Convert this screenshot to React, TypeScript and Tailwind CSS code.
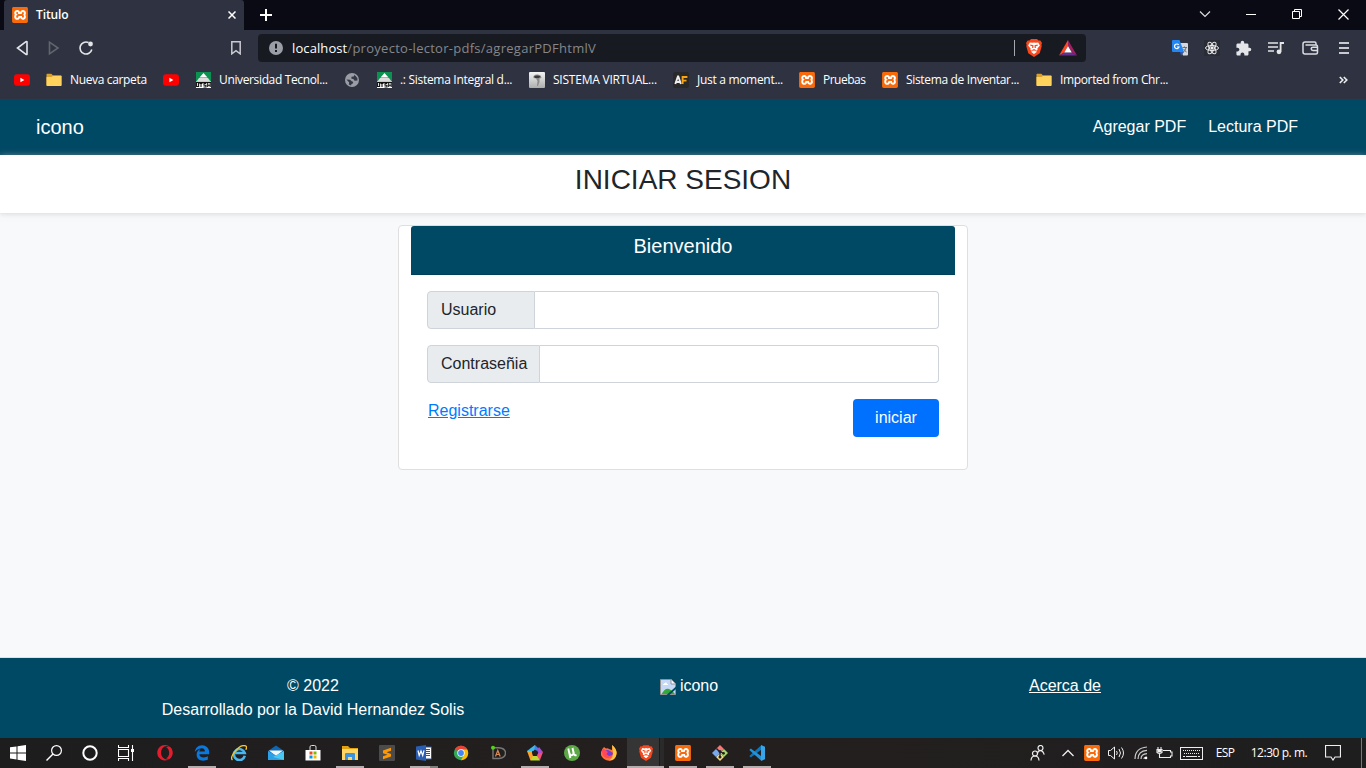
import React, { ReactNode } from 'react';
import { SiXampp } from 'react-icons/si';
import { FaEdgeLegacy, FaOpera } from 'react-icons/fa6';
import { MdExtension } from 'react-icons/md';

const XamppIcon = () => (
  <span className="flex h-4 w-4 items-center justify-center rounded-[2px] bg-[linear-gradient(white,white)] bg-[length:14px_14px] bg-center bg-no-repeat">
    <SiXampp size={16} color="#f96a0a" />
  </span>
);

const YoutubeIcon = () => (
  <svg width="16" height="16" viewBox="0 0 16 16">
    <rect y="2.300" width="16" height="11.400" rx="3" fill="#f00" />
    <path d="M6.400 5.700v4.600L10.400 8z" fill="#fff" />
  </svg>
);

const FolderIcon = () => (
  <svg width="16" height="16" viewBox="0 0 16 16">
    <path d="M.5 2.500q0-.8.8-.8h4l1.500 1.500h8q.7 0 .7.8v9q0 1-.8 1H1.300q-.8 0-.8-.9z" fill="#d9a02c" />
    <path d="M.5 5h5l1.500-1h8.500v9q0 .900-.8.900H1.300q-.8 0-.8-.9z" fill="#ffd35c" />
  </svg>
);

const UtshIcon = () => (
  <svg width="15" height="16" viewBox="0 0 15 16">
    <path d="M0 0h15v16H0z" fill="#fff" />
    <path d="M0 0h15v9.500H0z" fill="#0b9150" />
    <path d="M7.500 1l4 4.500H3.500z" fill="#fff" />
    <path d="M3 6h9l2.500 3.500H.5z" fill="#ddd" />
    <path d="M0 10h15v1H0z" fill="#111" />
    <path d="M.6 11v3.500h2V11M3.500 11.500h3M5 11.500V15M10.300 11.500H8v1.800h2V15H7.500M11.700 11v4M11.700 13.200h2.500M14.200 11v4" stroke="#111" strokeWidth="1.100" fill="none" />
  </svg>
);

const GlobeIcon = () => (
  <svg width="14" height="14" viewBox="0 0 14 14">
    <circle cx="7" cy="7" r="7" fill="#9a9da4" />
    <path d="M9.500 1.800L8.700 3.500 6.500 3.800 6.300 5.500 8.700 6.300 9.500 7.700 12.500 7.500 12.300 5z" fill="#343846" />
    <path d="M1.500 6.500L5 6.800l1.700 1.500 1.600.8-.8 1.700-1.200.5-.2 1.200-2.300-.9.400-2z" fill="#343846" />
  </svg>
);

const SealIcon = () => (
  <svg width="16" height="16" viewBox="0 0 16 16">
    <defs>
      <linearGradient id="seal" x2="0" y2="1">
        <stop stopColor="#f4f4f4" />
        <stop offset="1" stopColor="#adadad" />
      </linearGradient>
    </defs>
    <rect width="16" height="16" rx="1" fill="url(#seal)" />
    <path d="M4.500 4q3-2.500 7-.5l1 2.500-2 .5v3.500l-1.500 4H8L8.500 9 7 6.500 4.500 6z" fill="#8b8b8b" />
    <path d="M5 4.500Q8 2.500 11.500 4.500L10 6H6z" fill="#3a3a3a" />
  </svg>
);

const AfIcon = () => (
  <svg width="16" height="16" viewBox="0 0 16 16" fill="none" strokeWidth="1.900">
    <rect width="16" height="16" rx="2.500" fill="#292929" />
    <path d="M2.300 12L4.900 4.500h.4L7.900 12M3.500 10h3.300" stroke="#eee" />
    <path d="M9.600 12V5h4.800M9.500 8.600h4" stroke="#f7a417" />
  </svg>
);

const BraveIcon = ({ w = 16, h = 18 }: { w?: number; h?: number }) => (
  <svg width={w} height={h} viewBox="0 0 16 18">
    <path d="M5 0h6l1.500 1.500 1.800-.1L16 4l-.6 1.800.3 1.500-2 7L8 18l-5.700-3.700-2-7 .3-1.500L0 4l1.700-2.600 1.800.1z" fill="#f9471c" />
    <path d="M3.800 3.400l2.500.4L8 3.400l1.700.4 2.500-.4 1.700 3-2.500 3.100.2 1.500-2.200 1L11 12.700 8 15l-3-2.300 1.600-.7-2.200-1 .2-1.500L2.100 6.400z" fill="#fff" />
    <path d="M4.200 6l2.700.8-.2 2.200M11.800 6l-2.700.8.2 2.200M6.300 11.500L8 10.700l1.700.8" stroke="#f9471c" fill="none" strokeWidth="1.200" />
  </svg>
);

const BatIcon = () => (
  <svg width="18" height="16" viewBox="0 0 18 16">
    <path d="M9 0L0 15.500 5.200 12.500 9 6z" fill="#ff4724" />
    <path d="M9 0l9 15.500-5.200-3L9 6z" fill="#9e1f63" />
    <path d="M0 15.500h18l-5.200-3H5.200z" fill="#662d91" />
    <path d="M9 6l3.800 6.500H5.200z" fill="#fff" />
  </svg>
);

const TranslateIcon = () => (
  <svg width="16" height="16" viewBox="0 0 16 16" fill="none">
    <path d="M7 3h8q1 0 1 1v10.500q0 1-1 1h-4z" fill="#d5d8dc" />
    <path d="M1 0h6.500L12 12H1q-1 0-1-1V1q0-1 1-1z" fill="#2286f3" />
    <path d="M8 12h4l-3 3.800z" fill="#2459bd" />
    <path d="M6.700 5A2.300 2.300 0 1 0 7 7H5" stroke="#fff" strokeWidth="1.200" />
    <path d="M10.500 7.500h4.500M12.500 6.500v1M14 8q-1 3-3 4.500M11.500 9l3 3.300" stroke="#667079" />
  </svg>
);

const ReactIcon = () => (
  <svg width="16" height="16" viewBox="0 0 16 16" fill="none" stroke="#e9e9ea" strokeWidth="1">
    <path d="M0 0h16v16H0z" fill="#292c35" stroke="none" />
    <ellipse cx="8" cy="8" rx="6.500" ry="2.500" />
    <ellipse cx="8" cy="8" rx="6.500" ry="2.500" transform="rotate(60 8 8)" />
    <ellipse cx="8" cy="8" rx="6.500" ry="2.500" transform="rotate(120 8 8)" />
    <circle cx="8" cy="8" r="1.200" fill="#fff" />
  </svg>
);

const MusicListIcon = () => (
  <svg width="16" height="14" viewBox="0 0 16 14">
    <path d="M0 2h10M0 6h10M0 10h6" stroke="#e4e5e7" strokeWidth="1.700" />
    <path d="M12.600 10.500V2H16" stroke="#e4e5e7" strokeWidth="1.800" fill="none" />
    <circle cx="11" cy="10.800" r="2.400" fill="#e4e5e7" />
  </svg>
);

const WalletIcon = () => (
  <svg width="17" height="14" viewBox="0 0 17 14" fill="none" stroke="#dcdde0" strokeWidth="1.500">
    <path d="M14 4V2.500Q14 1 12.500 1H3Q1 1 1 3v8q0 2 2 2h11q1.500 0 1.500-1.500V6Q15.500 4 14 4H3.500" />
    <path d="M15.500 6.200H11q-1.800 0-1.800 1.600T11 9.500h4.500" />
  </svg>
);

const NoteIcon = () => (
  <svg width="14" height="14" viewBox="0 0 14 14">
    <circle cx="7" cy="7" r="7" fill="#9b9ea6" />
    <path d="M7 2.800v4.800M7 9v2" stroke="#17191f" strokeWidth="2" />
  </svg>
);

const BrokenImageIcon = () => (
  <svg width="16" height="16" viewBox="0 0 16 16">
    <path d="M.5.500h10.800l4.200 4.200V15.500H.5z" fill="#c5d9f7" stroke="#929292" />
    <path d="M3 6h5q.5-1-1-1.200Q6.500 3 5.200 3.700 4 4 4 4.900 2.800 5 3 6z" fill="#fff" />
    <path d="M1.500 15Q5 9.300 8 9.800T15 15z" fill="#34a839" />
    <path d="M11 .8V5h4.200" fill="#fff" stroke="#929292" />
    <path d="M16 7.500v2.500L9.500 16H6.500z" fill="#004965" />
  </svg>
);

const bookmarks: { icon: ReactNode; label?: string; gap: string; width: string; tracking?: string }[] = [
  { icon: <YoutubeIcon />, gap: 'ml-[14px]', width: 'w-0' },
  { icon: <FolderIcon />, label: 'Nueva carpeta', gap: 'ml-[16px]', width: 'w-[77px] ml-[8px]', tracking: 'tracking-[-0.35px]' },
  { icon: <YoutubeIcon />, gap: 'ml-[16px]', width: 'w-0' },
  { icon: <UtshIcon />, label: 'Universidad Tecnol...', gap: 'ml-[17px]', width: 'w-[108px] ml-[8px]', tracking: 'tracking-[-0.36px]' },
  { icon: <GlobeIcon />, gap: 'ml-[18px]', width: 'w-0' },
  { icon: <UtshIcon />, label: '.: Sistema Integral d...', gap: 'ml-[18px]', width: 'w-[112px] ml-[8px]', tracking: 'tracking-[-0.3px]' },
  { icon: <SealIcon />, label: 'SISTEMA VIRTUAL...', gap: 'ml-[17px]', width: 'w-[104px] ml-[8px]', tracking: 'tracking-[-0.22px]' },
  { icon: <AfIcon />, label: 'Just a moment...', gap: 'ml-[16px]', width: 'w-[86px] ml-[8px]', tracking: 'tracking-[-0.3px]' },
  { icon: <XamppIcon />, label: 'Pruebas', gap: 'ml-[16px]', width: 'w-[42px] ml-[8px]', tracking: 'tracking-[-0.5px]' },
  { icon: <XamppIcon />, label: 'Sistema de Inventar...', gap: 'ml-[17px]', width: 'w-[114px] ml-[8px]', tracking: 'tracking-[-0.34px]' },
  { icon: <FolderIcon />, label: 'Imported from Chr...', gap: 'ml-[16px]', width: 'w-[108px] ml-[8px]', tracking: 'tracking-[-0.35px]' },
];

function TabStrip() {
  return (
    <div className="flex h-[30px] bg-[#0a0a14] pl-1">
      <div className="flex w-[240px] items-center rounded-t-[3px] bg-[#2f3341] pl-2 pr-2">
        <XamppIcon />
        <span className="ml-2 flex-1 text-[12px] font-semibold tracking-[-0.1px]">Titulo</span>
        <svg width="8" height="8" viewBox="0 0 8 8" stroke="#fff" strokeWidth="1.500"><path d="M.5.500l7 7M7.500.500l-7 7" /></svg>
      </div>
      <svg width="12" height="12" viewBox="0 0 12 12" className="ml-4 mt-[9px]" stroke="#fff" strokeWidth="2"><path d="M6 0v12M0 6h12" /></svg>
      <svg width="154" height="14" viewBox="0 0 154 14" className="ml-auto mr-[17px] mt-[7px]" fill="none" stroke="#fff">
        <path d="M5 4.500l5 5 5-5" stroke="#ddd" strokeWidth="1.200" />
        <path d="M51 7.500h10" />
        <path d="M97.500 4.500h7v7h-7zM99.500 4.500v-2h7v7h-2" />
        <path d="M143.500 2.500l10 10M153.500 2.500l-10 10" strokeWidth="1.200" />
      </svg>
    </div>
  );
}

function Toolbar() {
  return (
    <div className="flex h-[36px] items-center bg-[#2f3341]">
      <svg width="78" height="16" viewBox="0 0 78 16" className="ml-4" fill="none" stroke="#e4e5e8" strokeWidth="1.600">
        <path d="M11 1.700v12.600q-.3.500-1 0L1.500 8 10 1.700q.7-.5 1 0z" />
        <path d="M33.500 2.200v11.600L42 8z" stroke="#62656f" />
        <path d="M75.800 9.500A6 6 0 1 1 72.500 2.600" />
        <circle cx="74.500" cy="4" r="2.400" fill="#e4e5e8" stroke="none" />
      </svg>
      <svg width="10" height="14" viewBox="0 0 10 14" className="ml-[137px]" fill="none" stroke="#c9cad0" strokeWidth="1.500">
        <path d="M.8.8h8.400v12L5 9.600.8 12.800z" />
      </svg>
      <div className="ml-[17px] flex h-[28px] w-[828px] items-center rounded-[4px] bg-[#181a21] pl-[11px] pr-[9px]">
        <NoteIcon />
        <span className="ml-[9px] text-[13px] tracking-[0.27px] text-[#85878c]"><span className="tracking-[0.1px] text-white">localhost</span>/proyecto-lector-pdfs/agregarPDFhtmlV</span>
        <span className="ml-auto mr-[11px] h-4 w-px bg-[#a6a8ae]" />
        <BraveIcon />
        <span className="ml-[17px]"><BatIcon /></span>
      </div>
      <div className="ml-[86px] flex items-center">
        <TranslateIcon />
        <span className="ml-4"><ReactIcon /></span>
        <MdExtension size={17} color="#e4e5e8" className="ml-[15px]" />
        <span className="ml-[16px]"><MusicListIcon /></span>
        <span className="ml-[18px]"><WalletIcon /></span>
        <svg width="10" height="12" viewBox="0 0 10 12" className="ml-[20px]" stroke="#c9cad0" strokeWidth="1.800"><path d="M0 1h10M0 6h10M0 11h10" /></svg>
      </div>
    </div>
  );
}

function Bookmarks() {
  return (
    <div className="flex h-[33px] items-center bg-[#2f3341] pb-[5px]">
      {bookmarks.map((b, i) => (
        <div key={i} className={`flex items-center ${b.gap}`}>
          {b.icon}
          <span className={`text-[12px] ${b.width} ${b.tracking ?? ''}`}>{b.label}</span>
        </div>
      ))}
      <svg width="9" height="8" viewBox="0 0 9 8" className="ml-auto mr-[18px]" fill="none" stroke="#eee" strokeWidth="1.600"><path d="M.8 1l3 3-3 3M4.800 1l3 3-3 3" /></svg>
    </div>
  );
}

function Page() {
  return (
    <div className="flex h-[639px] flex-col bg-[#f8f9fb] font-['Liberation_Sans',Arial,sans-serif] text-[16px] leading-6 text-[#212529]">
      <nav className="flex h-[56px] items-center bg-[#004965] pl-9 pr-[68px] text-white">
        <span className="text-[20px]">icono</span>
        <span className="ml-auto">Agregar PDF</span>
        <span className="ml-[22px]">Lectura PDF</span>
      </nav>
      <header className="relative h-[58px] bg-white pt-2 text-center shadow-[0_0_6px_rgba(170,170,170,0.55)]">
        <h1 className="text-[28px] leading-[33px]">INICIAR SESION</h1>
      </header>
      <main className="flex flex-1 justify-center pt-3">
        <section className="h-[245px] w-[570px] rounded-[4px] border border-[#dfdfdf] bg-white px-3">
          <h2 className="h-[49px] rounded-t-[3px] border-b border-[#003f59] bg-[#004965] pt-2 text-center text-[20px] text-white">Bienvenido</h2>
          <form className="px-4 pt-4">
            <label className="mb-4 flex h-[38px]">
              <span className="w-[108px] rounded-l-[4px] border border-[#ced4da] bg-[#e9ecef] pl-[13px] pt-[6px]">Usuario</span>
              <input className="min-w-0 flex-1 rounded-r-[4px] border border-l-0 border-[#ced4da] bg-white" />
            </label>
            <label className="mb-4 flex h-[38px]">
              <span className="w-[113px] rounded-l-[4px] border border-[#ced4da] bg-[#e9ecef] pl-[13px] pt-[6px]">Contraseñia</span>
              <input className="min-w-0 flex-1 rounded-r-[4px] border border-l-0 border-[#ced4da] bg-white" />
            </label>
            <div className="flex justify-between">
              <a className="ml-px text-[#007bff] underline">Registrarse</a>
              <button type="button" className="h-[38px] w-[86px] rounded-[4px] bg-[#0070ff] text-white">iniciar</button>
            </div>
          </form>
        </section>
      </main>
      <footer className="grid h-[81px] grid-cols-[376px_376px_376px] border-t border-[#dce2e8] bg-[#004965] pl-[125px] pt-4 text-center text-white">
        <div>© 2022<br />Desarrollado por la David Hernandez Solis</div>
        <div className="flex h-6 items-center justify-center gap-1"><span className="mt-px"><BrokenImageIcon /></span>icono</div>
        <a className="underline">Acerca de</a>
      </footer>
    </div>
  );
}

const Glyph = ({ w = 16, h = 16, children }: { w?: number; h?: number; children: ReactNode }) => (
  <svg width={w} height={h} viewBox={`0 0 ${w} ${h}`} fill="none">{children}</svg>
);

const system: ReactNode[] = [
  <Glyph><path d="M0 2.300L6.500 1.400v6.100H0zM7.500 1.200L16 0v7.500H7.500zM0 8.500h6.500v6L0 13.600zM7.500 8.500H16V16l-8.500-1.200z" fill="#fff" /></Glyph>,
  <Glyph><circle cx="10.500" cy="5.500" r="4.900" stroke="#fff" strokeWidth="1.200" /><path d="M7 9L.5 15.500" stroke="#fff" strokeWidth="1.400" /></Glyph>,
  <Glyph><circle cx="8" cy="8" r="6.700" stroke="#fff" strokeWidth="2" /></Glyph>,
  <Glyph><path d="M.5 0v2.500h10V0M.5 16v-2.500h10V16M.500 4.500h10v7H.5zM14.500 0v16" stroke="#fff" strokeWidth="1.100" /><path d="M13 4h3v3h-3z" fill="#fff" /></Glyph>,
];

const apps: { icon: ReactNode; state?: 'open' | 'active' | 'multi' }[] = [
  { icon: <FaOpera size={16} color="#e51c2e" /> },
  { icon: <FaEdgeLegacy size={16} color="#0b78dc" />, state: 'open' },
  { icon: <Glyph><path d="M13.800 10.800A5.500 5.500 0 1 1 13.700 8H4.500" stroke="#48b7ef" strokeWidth="2.600" /><path d="M1.500 15C-2 12 8-1 14.500.8c2 .8.7 3.200.3 4" stroke="#f4c52c" strokeWidth="1.400" /></Glyph> },
  { icon: <Glyph><path d="M0 6L8 .5 16 6v9H0z" fill="#0f67b2" /><path d="M1 5.500h14L8 11z" fill="#f3f7fa" /><path d="M0 6l16 9H0z" fill="#2ba0e6" /><path d="M16 6L5 12l11 3z" fill="#49c8f4" /></Glyph> },
  { icon: <Glyph><path d="M5 5V2q0-1.500 1.500-1.500h3Q11 .5 11 2v3" stroke="#ddd" /><path d="M.500 5h15v10.500H.500z" fill="#fff" /><path d="M4.500 6.500h3v3h-3z" fill="#ee4d22" /><path d="M8.500 6.500h3v3h-3z" fill="#7db900" /><path d="M4.500 10.500h3v3h-3z" fill="#0097e5" /><path d="M8.500 10.500h3v3h-3z" fill="#f7b500" /></Glyph> },
  { icon: <Glyph><path d="M0 1h6l2 2h8v11H0z" fill="#e5a00d" /><path d="M0 4h16v11H0z" fill="#ffd665" /><path d="M3 15V9q0-1 1-1h8q1 0 1 1v6h-3v-3H6v3z" fill="#3c93db" /></Glyph>, state: 'open' },
  { icon: <Glyph><rect width="16" height="16" rx="1" fill="#4b4b4b" /><path d="M4 5.500l8-2.700v3L7.500 7.300 12 8.900v2.500l-8 2.800v-3l4.500-1.500L4 8.200z" fill="#ff9800" /></Glyph> },
  { icon: <Glyph><path d="M9 2h6.500v12H9z" fill="#fff" stroke="#2b579a" /><path d="M10 4.500h4M10 6.500h4M10 8.500h4M10 10.500h4" stroke="#2b579a" /><path d="M0 1.500L10 0v16L0 14.500z" fill="#2b5db0" /><path d="M2 5.500l1.200 5L5 6l1.700 4.500L8 5.300" stroke="#fff" strokeWidth="1.200" /></Glyph>, state: 'multi' },
  { icon: <Glyph><circle cx="8" cy="8" r="7.200" fill="#34a853" /><path d="M8 8L1.800 4.300A7.200 7.200 0 0 1 14.300 4.500H8z" fill="#ea4335" /><path d="M8 4.500h6.300A7.200 7.200 0 0 1 8 15.200L11.300 9z" fill="#fbbc05" /><circle cx="8" cy="8" r="3.700" fill="#fff" /><circle cx="8" cy="8" r="2.900" fill="#4285f4" /></Glyph> },
  { icon: <Glyph><path d="M3 3v10.500h6q6.500-.8 6.500-5.500T9 2.700H4" stroke="#777" strokeWidth="1.400" /><circle cx="3" cy="2.700" r="2" fill="#55d11d" /><path d="M5.500 11.500l2.300-6 2.400 6M6.500 9.500H9" stroke="#d98b56" strokeWidth="1.200" /></Glyph> },
  { icon: <Glyph><path d="M8 0l4 4-3 2-6-2z" fill="#447fee" /><path d="M12 2l4 5-5 3-1-5z" fill="#a24fd9" /><path d="M16 7l-3 8-4-2 1-4z" fill="#f15178" /><path d="M13 15.500H3.500L4 11h6z" fill="#bedb33" /><path d="M3.500 15.500L0 6l5-1 1 6z" fill="#ffa226" /><path d="M0 6l8-6-1 6z" fill="#39bde8" /><path d="M8 4.800L11.200 7 10 10.800H6L4.800 7z" fill="#261e20" /></Glyph>, state: 'open' },
  { icon: <Glyph><circle cx="8" cy="8" r="8" fill="#5ca846" /><path d="M4.300 3.500l2 9.500M5.500 8q.7 3 3 2 1.500-1 .7-3.500L8.500 3l1.500 6q.5 1.700 2.500 1" stroke="#fff" strokeWidth="1.900" /></Glyph> },
  { icon: <Glyph><path d="M3 2l2 1.500Q7 3 8 4l3 1V0q4 3 4.500 7 .5 5-3.500 8-5 2-9-1T0 7q1-3 3-5z" fill="#ff7038" /><path d="M11 0q5 4 4.500 9-1 6-7.500 6.500Q13 12 12 7z" fill="#ffc83d" /><path d="M4 6q2-2 5 0l3 2q-1 4-4.500 4T4 8z" fill="#743bd5" /><path d="M1 4q2-1 3 1l3 2-1.500 2L8 11l3-1q-1 3-4 3-5 0-6-6z" fill="#ff4758" /></Glyph> },
  { icon: <BraveIcon w={14} h={16} />, state: 'active' },
  { icon: <XamppIcon />, state: 'open' },
  { icon: <Glyph><path d="M8 0l4 4-4 4-4-4z" fill="#f47979" /><path d="M12 4l4 4-4 4-4-4z" fill="#a4d66c" /><path d="M8 8l4 4-4 4-4-4z" fill="#f4dc82" /><path d="M4 4l4 4-4 4-4-4z" fill="#79a8ed" /><path d="M4.500 3.500L8 7v5M8 7l3.500 1" stroke="#222" strokeWidth="1.300" /><circle cx="8" cy="6.500" r="1.500" fill="#222" /><circle cx="8" cy="12" r="1.500" fill="#222" /><circle cx="11.500" cy="8.300" r="1.400" fill="#222" /></Glyph>, state: 'open' },
  { icon: <Glyph><path d="M12 0l4 1.800v12.400L12 16z" fill="#38a5e8" /><path d="M12 0.500L.3 11l1.500 1.500L12 5z" fill="#0d75bd" /><path d="M12 15.500L.3 5l1.500-1.500L12 11z" fill="#2392d8" /></Glyph>, state: 'open' },
];

function Taskbar() {
  return (
    <div className="flex h-[30px] bg-[#1f1f1f] bg-gradient-to-r from-[#1d1d1d] via-[#241f1f] to-[#1e1e1e]">
      {system.map((icon, i) => <div key={i} className="flex w-9 items-center justify-center">{icon}</div>)}
      <div className="ml-[2px] flex">
        {apps.map((app, i) => (
          <div key={i} className={`relative flex w-[37px] items-center justify-center ${app.state === 'active' ? 'bg-[#363535] bg-[linear-gradient(to_right,transparent_32px,#1b1a1a_32px,#1b1a1a_33px,#2b2a2a_33px)]' : ''}`}>
            {app.icon}
            {app.state === 'open' && <span className="absolute bottom-0 left-[5px] h-[2px] w-7 bg-[#b5adad]" />}
            {app.state === 'active' && <span className="absolute bottom-0 left-0 h-[2px] w-full bg-[#b5adad]" />}
            {app.state === 'multi' && <span className="absolute bottom-0 left-[5px] h-[2px] w-7 border-r-8 border-[#827d7d] bg-[#b5adad]" />}
          </div>
        ))}
      </div>
      <div className="ml-auto flex items-center text-[12px] text-white *:shrink-0">
        <span className="flex w-[30px] justify-center"><Glyph><g stroke="#eee" strokeWidth="1.200"><circle cx="10.500" cy="3" r="2.500" /><path d="M7.500 8.500Q8 5.700 10.500 5.700t3.700 4" /><circle cx="5" cy="8.500" r="2.500" /><path d="M1 15.500Q1.300 11 5 11t4 4.500" /></g></Glyph></span>
        <span className="flex w-[30px] justify-center"><Glyph w={12} h={8}><path d="M.500 7L6 1.500 11.500 7" stroke="#eee" strokeWidth="1.300" /></Glyph></span>
        <span className="flex w-[18px] justify-center"><XamppIcon /></span>
        <span className="flex w-[30px] justify-center"><Glyph w={17} h={14}><g stroke="#eee"><path d="M.500 4.500h2l4-3.500v12l-4-3.500h-2z" /><path d="M8.500 5q1.500 2 0 4M11 3q3 4 0 8M13.500 1.500q4 5.500 0 11" /></g></Glyph></span>
        <span className="flex w-[20px] justify-center"><Glyph w={14} h={14}><g stroke="#ccc" strokeWidth="1.200"><path d="M1 13Q1 2 13 1M4 13Q4 5 13 4.300M7 13q0-5 6-5.300" /><path d="M10 13q0-2 3-2" /></g><circle cx="12" cy="12" r="1.300" fill="#fff" /></Glyph></span>
        <span className="flex w-[26px] justify-center"><Glyph w={17} h={14}><g stroke="#eee" strokeWidth="1.100"><path d="M7 4.500h7.500V6H16v4h-1.500v1.500h-9" /><path d="M1 3.500v3q2.500 2 5 0v-3zM2 3.500V1M5 3.500V1M3.500 7.500v4H6" /></g><path d="M1.500 4h4v2.500h-4z" fill="#eee" /></Glyph></span>
        <span className="flex w-[28px] justify-center"><Glyph w={23} h={13}><rect x=".5" y=".5" width="22" height="12" stroke="#eee" /><path d="M3 3.500h17M4 6.500h15" stroke="#eee" strokeDasharray="1 1" /><path d="M3 9.500h2M6 9.500h11M18 9.500h2" stroke="#eee" /></Glyph></span>
        <span className="w-[40px] text-center tracking-[-0.7px]">ESP</span>
        <span className="w-[68px] whitespace-nowrap text-center tracking-[-0.45px]">12:30 p. m.</span>
        <span className="flex w-[40px] justify-center"><Glyph><path d="M.500.500h15v11.500H10L8 15l-2-3H.500z" stroke="#eee" strokeWidth="1.200" /></Glyph></span>
        <span className="ml-2 mr-1 h-[30px] w-px bg-[#777]" />
      </div>
    </div>
  );
}

export default function App() {
  return (
    <div className="h-[768px] w-[1366px] overflow-hidden font-['Open_Sans','Noto_Sans',sans-serif] text-white">
      <div className="whitespace-nowrap leading-4 [&_svg]:shrink-0">
        <TabStrip />
        <Toolbar />
        <Bookmarks />
      </div>
      <Page />
      <Taskbar />
    </div>
  );
}
